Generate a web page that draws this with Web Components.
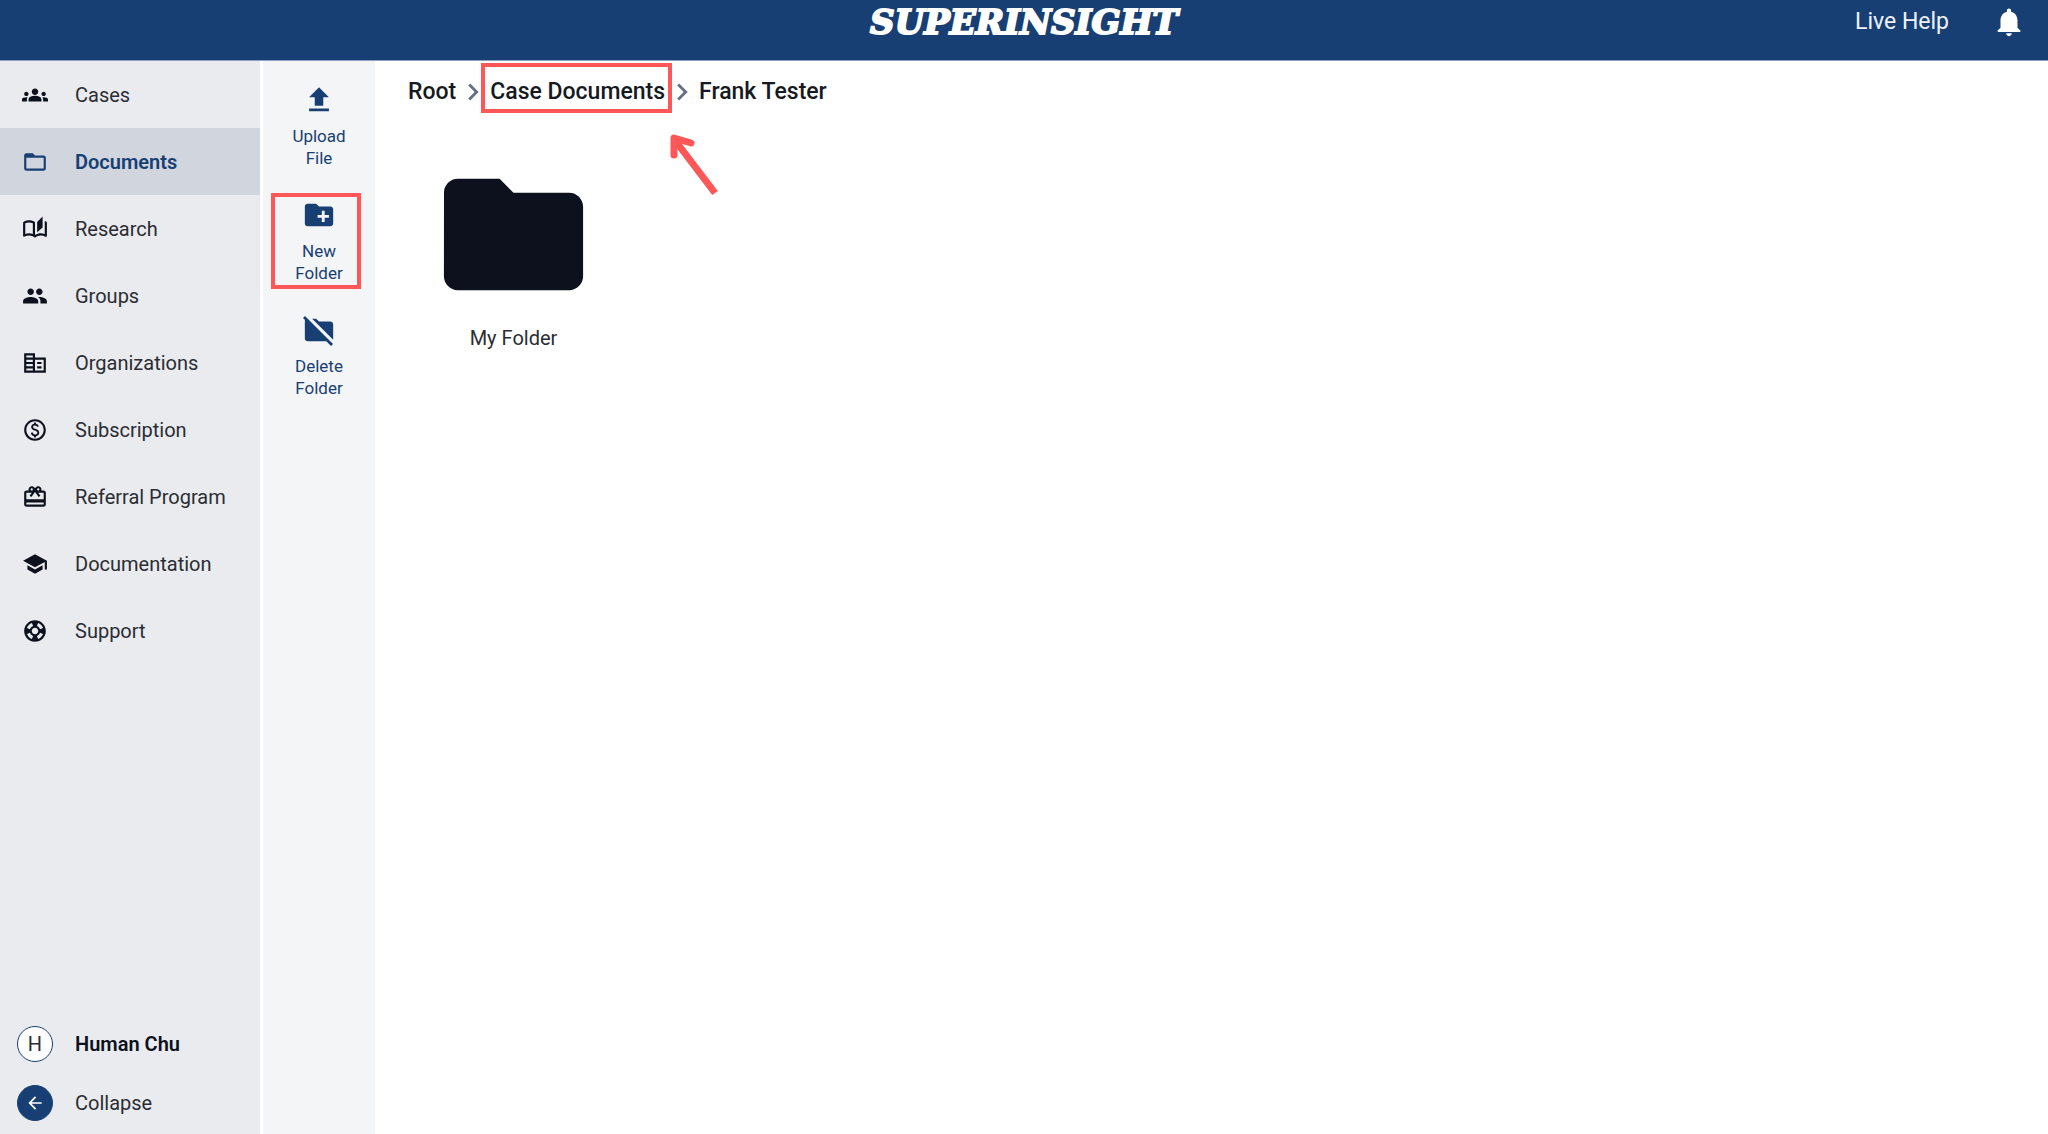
<!DOCTYPE html>
<html lang="en">
<head>
<meta charset="utf-8">
<meta name="viewport" content="width=device-width, initial-scale=1">
<title>Superinsight - Documents</title>
<style>
  html, body { margin: 0; height: 100%; }
  body { font-family: Roboto, "Liberation Sans", sans-serif; background: #fff; color: #2a2d33; }
</style>
</head>
<body>
<si-app></si-app>
<script>
const ICONS = {
  cases: '<path d="M12 12.75c1.63 0 3.07.39 4.24.9 1.08.48 1.76 1.56 1.76 2.73V18H6v-1.61c0-1.18.68-2.26 1.76-2.73 1.17-.52 2.61-.91 4.24-.91zM4 13c1.1 0 2-.9 2-2s-.9-2-2-2-2 .9-2 2 .9 2 2 2zm1.13 1.1c-.37-.06-.74-.1-1.13-.1-.99 0-1.93.21-2.78.58C.48 14.9 0 15.62 0 16.43V18h4.5v-1.61c0-.83.23-1.61.63-2.29zM20 13c1.1 0 2-.9 2-2s-.9-2-2-2-2 .9-2 2 .9 2 2 2zm4 3.43c0-.81-.48-1.53-1.22-1.85-.85-.37-1.79-.58-2.78-.58-.39 0-.76.04-1.13.1.4.68.63 1.46.63 2.29V18H24v-1.57zM12 6c1.66 0 3 1.34 3 3s-1.34 3-3 3-3-1.34-3-3 1.34-3 3-3z"/>',
  documents: '<path d="M20 6h-8l-2-2H4c-1.1 0-1.99.9-1.99 2L2 18c0 1.1.9 2 2 2h16c1.1 0 2-.9 2-2V8c0-1.1-.9-2-2-2zm0 12H4V8h16v10z"/>',
  research: '<path d="M22.47 5.2c-.47-.24-.96-.44-1.47-.61v12.03c-1.14-.41-2.31-.62-3.5-.62-1.9 0-3.78.54-5.5 1.58V5.48C10.38 4.55 8.51 4 6.5 4c-1.79 0-3.48.44-4.97 1.2-.33.16-.53.51-.53.88v12.08c0 .58.47.99 1 .99.16 0 .32-.04.48-.12C3.69 18.4 5.05 18 6.5 18c2.07 0 3.98.82 5.5 2 1.52-1.18 3.43-2 5.5-2 1.45 0 2.81.4 4.02 1.04.16.08.32.12.48.12.52 0 1-.41 1-.99V6.08c0-.37-.2-.72-.53-.88zM10 16.62C8.86 16.21 7.69 16 6.5 16s-2.36.21-3.5.62V6.71C4.11 6.24 5.28 6 6.5 6c1.2 0 2.39.25 3.5.72v9.9zM19 .5l-5 5V15l5-4.5V.5z"/>',
  groups: '<path d="M16 11c1.66 0 2.99-1.34 2.99-3S17.66 5 16 5c-1.66 0-3 1.34-3 3s1.34 3 3 3zm-8 0c1.66 0 2.99-1.34 2.99-3S9.66 5 8 5C6.34 5 5 6.34 5 8s1.34 3 3 3zm0 2c-2.33 0-7 1.17-7 3.5V19h14v-2.5c0-2.33-4.67-3.5-7-3.5zm8 0c-.29 0-.62.02-.97.05 1.16.84 1.97 1.97 1.97 3.45V19h6v-2.5c0-2.33-4.67-3.5-7-3.5z"/>',
  organizations: '<path fill-rule="evenodd" d="M12 7V3H2v18h20V7H12zM10 19H4v-2h6v2zm0-4H4v-2h6v2zm0-4H4V9h6v2zm0-4H4V5h6v2zm10 12h-8V9h8v10zm-2-8h-4v2h4v-2zm0 4h-4v2h4v-2z"/>',
  subscription: '<path d="M12 2C6.48 2 2 6.48 2 12s4.48 10 10 10 10-4.48 10-10S17.52 2 12 2zm0 18c-4.41 0-8-3.59-8-8s3.59-8 8-8 8 3.59 8 8-3.59 8-8 8zm.89-8.9c-1.78-.59-2.64-.96-2.64-1.9 0-1.02 1.11-1.39 1.81-1.39 1.31 0 1.79.99 1.9 1.34l1.58-.67c-.15-.44-.82-1.91-2.66-2.23V5h-1.75v1.26c-2.6.56-2.62 2.85-2.62 2.96 0 2.27 2.25 2.91 3.35 3.31 1.58.56 2.28 1.07 2.28 2.03 0 1.13-1.05 1.61-1.98 1.61-1.82 0-2.34-1.87-2.4-2.09l-1.66.67c.63 2.19 2.28 2.78 3.02 2.96V19h1.75v-1.24c.52-.09 3.02-.59 3.02-3.22.01-1.39-.6-2.61-3-3.44z"/>',
  referral: '<path d="M20 6h-2.18c.11-.31.18-.65.18-1 0-1.66-1.34-3-3-3-1.05 0-1.96.54-2.5 1.35l-.5.67-.5-.68C10.96 2.54 10.05 2 9 2 7.34 2 6 3.34 6 5c0 .35.07.69.18 1H4c-1.11 0-1.99.89-1.99 2L2 19c0 1.11.89 2 2 2h16c1.11 0 2-.89 2-2V8c0-1.11-.89-2-2-2zm-5-2c.55 0 1 .45 1 1s-.45 1-1 1-1-.45-1-1 .45-1 1-1zM9 4c.55 0 1 .45 1 1s-.45 1-1 1-1-.45-1-1 .45-1 1-1zm11 15H4v-2h16v2zm0-5H4V8h5.08L7 10.83 8.62 12 11 8.76l1-1.36 1 1.36L15.38 12 17 10.83 14.92 8H20v6z"/>',
  documentation: '<path d="M5 13.18v4L12 21l7-3.82v-4L12 17l-7-3.82zM12 3L1 9l11 6 9-4.91V17h2V9L12 3z"/>',
  support: '<path d="M12 2C6.48 2 2 6.48 2 12s4.48 10 10 10 10-4.48 10-10S17.52 2 12 2zm7.46 7.12l-2.78 1.15c-.51-1.36-1.58-2.44-2.95-2.94l1.15-2.78c2.1.8 3.77 2.47 4.58 4.57zM12 15c-1.66 0-3-1.34-3-3s1.34-3 3-3 3 1.34 3 3-1.34 3-3 3zM9.13 4.54l1.17 2.78c-1.38.5-2.47 1.59-2.98 2.97L4.54 9.13c.81-2.11 2.48-3.78 4.59-4.59zM4.54 14.87l2.78-1.15c.51 1.38 1.59 2.46 2.97 2.96l-1.17 2.78c-2.1-.81-3.77-2.48-4.58-4.59zm10.34 4.59l-1.15-2.78c1.37-.51 2.45-1.59 2.95-2.97l2.78 1.17c-.81 2.1-2.48 3.77-4.58 4.58z"/>',
  upload: '<path d="M5 20h14v-2H5v2zm0-10h4v6h6v-6h4l-7-7-7 7z"/>',
  newFolder: '<path d="M20 6h-8l-2-2H4c-1.11 0-1.99.89-1.99 2L2 18c0 1.11.89 2 2 2h16c1.11 0 2-.89 2-2V8c0-1.11-.89-2-2-2zm-1 8h-3v3h-2v-3h-3v-2h3V9h2v3h3v2z"/>',
  deleteFolder: '<path d="M22 8c0-1.1-.9-2-2-2h-8l-2-2H7.17L22 18.83V8zM2.1 2.1L.69 3.51 2 4.83V18c0 1.1.9 2 2 2h13.17l3.31 3.31 1.41-1.41L2.1 2.1z"/>',
  folder: '<path d="M10 4H4c-1.1 0-1.99.9-1.99 2L2 18c0 1.1.9 2 2 2h16c1.1 0 2-.9 2-2V8c0-1.1-.9-2-2-2h-8l-2-2z"/>',
  bell: '<path d="M12 22c1.1 0 2-.9 2-2h-4c0 1.1.89 2 2 2zm6-6v-5c0-3.07-1.64-5.64-4.5-6.32V4c0-.83-.67-1.5-1.5-1.5s-1.5.67-1.5 1.5v.68C7.63 5.36 6 7.92 6 11v5l-2 2v1h16v-1l-2-2z"/>',
  chevron: '<path d="M10 6L8.59 7.41 13.17 12l-4.58 4.59L10 18l6-6z"/>',
  back: '<path d="M20 11H7.83l5.59-5.59L12 4l-8 8 8 8 1.41-1.41L7.83 13H20v-2z"/>'
};

function define(name, markup, setup) {
  const template = document.createElement('template');
  template.innerHTML = markup;
  customElements.define(name, class extends HTMLElement {
    connectedCallback() {
      if (this.shadowRoot) return;
      const root = this.attachShadow({ mode: 'open' });
      root.append(template.content.cloneNode(true));
      if (setup) setup(this, root);
    }
  });
}

define('si-icon', `
  <style>
    :host { display: block; flex: none; width: var(--icon-size, 26px); height: var(--icon-size, 26px); }
    svg { display: block; width: 100%; height: 100%; fill: currentColor; }
  </style>
  <svg viewBox="0 0 24 24" aria-hidden="true"></svg>`,
  (el, root) => { root.querySelector('svg').innerHTML = ICONS[el.getAttribute('name')]; });

define('si-header', `
  <style>
    :host { display: block; background: #183f73; border-bottom: 1px solid #8f9fc0; color: #fff; }
    header { display: grid; grid-template-columns: 1fr auto 1fr; align-items: center; height: 44px; padding: 0 22px 16px; }
    .logo { grid-column: 2; font: italic bold 34px/44px "DejaVu Serif", serif; -webkit-text-stroke: 2px #fff; color: #fff; text-decoration: none; }
    .actions { display: flex; align-items: center; justify-content: flex-end; gap: 43px; --icon-size: 34px; }
    .help { color: #eef2f8; font-size: 23px; line-height: 26px; text-decoration: none; }
    button { border: 0; padding: 0; background: none; color: inherit; }
  </style>
  <header>
    <a class="logo" href="#">SUPERINSIGHT</a>
    <div class="actions">
      <a class="help" href="#help">Live Help</a>
      <button aria-label="Notifications"><si-icon name="bell"></si-icon></button>
    </div>
  </header>`);

define('si-nav-item', `
  <style>
    :host { display: block; }
    a { display: flex; align-items: center; gap: 27px; height: 67px; padding: 0 22px; color: #2a2d33; font-size: 20px; line-height: 24px; text-decoration: none; }
    si-icon { color: #0c111d; }
    :host([active]) a { background: #d0d5de; color: #183f73; font-weight: 600; }
    :host([active]) si-icon { color: #183f73; }
  </style>
  <a href="#"><si-icon></si-icon><slot></slot></a>`,
  (el, root) => {
    const icon = document.createElement('si-icon');
    icon.setAttribute('name', el.getAttribute('icon'));
    root.querySelector('si-icon').replaceWith(icon);
  });

define('si-sidebar', `
  <style>
    :host { display: flex; flex-direction: column; justify-content: space-between; background: #eaebef; }
    .account { display: flex; flex-direction: column; gap: 23px; padding: 0 17px 13px; }
    .row { display: flex; align-items: center; gap: 22px; border: 0; padding: 0; background: none; font: 20px/24px Roboto, sans-serif; color: #2a2d33; text-align: left; }
    .disc { box-sizing: border-box; display: flex; align-items: center; justify-content: center; width: 36px; height: 36px; border-radius: 50%; border: 1px solid #183f73; background: #fff; --icon-size: 20px; }
    .solid { background: #183f73; color: #fff; }
    .name { font-weight: 600; color: #0c111d; }
  </style>
  <nav>
    <si-nav-item icon="cases">Cases</si-nav-item>
    <si-nav-item icon="documents" active>Documents</si-nav-item>
    <si-nav-item icon="research">Research</si-nav-item>
    <si-nav-item icon="groups">Groups</si-nav-item>
    <si-nav-item icon="organizations">Organizations</si-nav-item>
    <si-nav-item icon="subscription">Subscription</si-nav-item>
    <si-nav-item icon="referral">Referral Program</si-nav-item>
    <si-nav-item icon="documentation">Documentation</si-nav-item>
    <si-nav-item icon="support">Support</si-nav-item>
  </nav>
  <div class="account">
    <button class="row"><span class="disc">H</span><span class="name">Human Chu</span></button>
    <button class="row"><span class="disc solid"><si-icon name="back"></si-icon></span><span>Collapse</span></button>
  </div>`);

define('si-tool', `
  <style>
    :host { display: block; position: relative; --icon-size: 34px; }
    button { display: flex; flex-direction: column; align-items: center; gap: 8px; width: 100%; border: 0; padding: 0 20px; background: none; color: #183f73; font: 17px/22px Roboto, sans-serif; }
    :host([marked])::after { content: ""; position: absolute; inset: -5px 14px -5px 8px; border: 4px solid #ff5757; }
  </style>
  <button><si-icon></si-icon><span><slot></slot></span></button>`,
  (el, root) => {
    const icon = document.createElement('si-icon');
    icon.setAttribute('name', el.getAttribute('icon'));
    root.querySelector('si-icon').replaceWith(icon);
  });

define('si-toolbar', `
  <style>
    :host { display: flex; flex-direction: column; gap: 29px; padding-top: 22px; background: #f4f5f7; }
  </style>
  <si-tool icon="upload">Upload<br>File</si-tool>
  <si-tool icon="newFolder" marked>New<br>Folder</si-tool>
  <si-tool icon="deleteFolder">Delete<br>Folder</si-tool>`);

define('si-breadcrumbs', `
  <style>
    :host { display: block; }
    nav { display: flex; align-items: center; --icon-size: 34px; }
    a { position: relative; color: #16191f; font-size: 23px; font-weight: 500; line-height: 30px; text-decoration: none; }
    si-icon { color: #667085; }
    .marked::after { content: ""; position: absolute; inset: -14px -7px -6px -9px; border: 4px solid #ff5757; }
    .pointer { position: absolute; left: 100%; top: 57px; width: 50px; height: 64px; overflow: visible; }
  </style>
  <nav aria-label="Breadcrumb">
    <a href="#root">Root</a>
    <si-icon name="chevron"></si-icon>
    <a class="marked" href="#cases">Case Documents<svg class="pointer" viewBox="0 0 50 64" fill="none" stroke="#ff5757" stroke-width="7" aria-hidden="true"><path d="M9 5L50 59"/><path d="M9 21V4L26 9" stroke-linecap="round" stroke-linejoin="round"/></svg></a>
    <si-icon name="chevron"></si-icon>
    <a href="#frank">Frank Tester</a>
  </nav>`);

define('si-folder', `
  <style>
    :host { display: block; --icon-size: 167px; }
    a { display: flex; flex-direction: column; align-items: center; gap: 8px; color: #2a2d33; font-size: 20px; line-height: 24px; text-decoration: none; }
    si-icon { color: #0c111d; }
  </style>
  <a href="#folder"><si-icon name="folder"></si-icon><span><slot></slot></span></a>`);

define('si-app', `
  <style>
    :host { display: flex; flex-direction: column; min-height: 100%; }
    .body { flex: 1; display: grid; grid-template-columns: 260px 112px 1fr; column-gap: 3px; }
    main { padding: 14px 30px; }
    .files { display: flex; flex-wrap: wrap; gap: 40px; padding: 42px 22px; }
  </style>
  <si-header></si-header>
  <div class="body">
    <si-sidebar></si-sidebar>
    <si-toolbar></si-toolbar>
    <main>
      <si-breadcrumbs></si-breadcrumbs>
      <div class="files"><si-folder>My Folder</si-folder></div>
    </main>
  </div>`);
</script>
</body>
</html>
